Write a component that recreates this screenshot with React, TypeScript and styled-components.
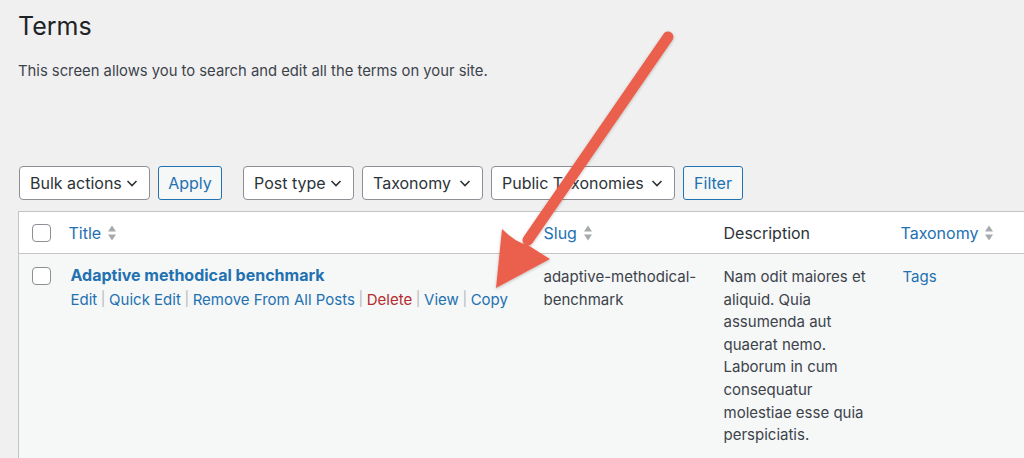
import styled, { createGlobalStyle } from 'styled-components'

const GlobalStyle = createGlobalStyle`
  html, body {
    margin: 0;
    padding: 0;
    background: #f0f0f1;
    overflow: hidden;
  }
  body {
    font-family: Inter, "Noto Sans", sans-serif;
    color: #3c434a;
    font-size: 15px;
  }
`

// Page layout
const Page = styled.div`
  position: relative;
  width: 1024px;
  height: 458px;
  padding-left: 18px;
  box-sizing: border-box;
  overflow: hidden;
`
const Heading = styled.h1`
  margin: 0;
  padding-top: 9px;
  font-size: 25px;
  font-weight: 400;
  line-height: 34px;
  color: #1d2327;
`
const Intro = styled.p`
  margin: 17px 0 0;
  font-size: 14.8px;
  line-height: 22px;
  color: #3c434a;
`

// Toolbar
const Toolbar = styled.div`
  display: flex;
  align-items: center;
  margin-top: 84px;
  margin-left: 1px;
`
const Group = styled.div<{ $gap?: number }>`
  display: flex;
  gap: 8px;
  margin-right: ${(p) => p.$gap ?? 0}px;
`
const Select = styled.div<{ $width: number }>`
  display: flex;
  align-items: center;
  justify-content: space-between;
  box-sizing: border-box;
  width: ${(p) => p.$width}px;
  height: 34px;
  padding: 0 10px 0 10px;
  background: #fff;
  border: 1px solid #8c8f94;
  border-radius: 4px;
  color: #2c3338;
  font-size: 16px;
`
const Button = styled.div<{ $width: number }>`
  display: flex;
  align-items: center;
  justify-content: center;
  box-sizing: border-box;
  width: ${(p) => p.$width}px;
  height: 34px;
  background: #f6f7f7;
  border: 1px solid #2271b1;
  border-radius: 3px;
  color: #2271b1;
  font-size: 16px;
`

// Table
const Table = styled.table`
  margin-top: 11px;
  width: 1100px;
  table-layout: fixed;
  border-collapse: collapse;
  border: 1px solid #c3c4c7;
`
const HeadRow = styled.tr`
  background: #fff;
  border-bottom: 1px solid #c3c4c7;
`
const Th = styled.th`
  height: 41px;
  padding: 0 12px;
  text-align: left;
  font-weight: 400;
  font-size: 16px;
  color: #2c3338;
  vertical-align: middle;
`
const SortLink = styled.span`
  display: inline-flex;
  align-items: center;
  gap: 6px;
  color: #2271b1;
`
const BodyRow = styled.tr`
  background: #f6f7f7;
`
const Td = styled.td`
  padding: 12px 12px 0;
  vertical-align: top;
  font-size: 15px;
  line-height: 22.6px;
  color: #3c434a;
  height: 200px;
`
const CheckCell = styled.td<{ $top: number }>`
  padding: ${(p) => p.$top}px 0 0 13px;
  vertical-align: top;
`
const CheckHead = styled.th`
  padding: 0 0 0 13px;
  vertical-align: middle;
  text-align: left;
`
const Checkbox = styled.span`
  display: block;
  width: 19px;
  height: 18px;
  box-sizing: border-box;
  background: #fff;
  border: 1px solid #8c8f94;
  border-radius: 4px;
`
const RowTitle = styled.div`
  font-weight: 700;
  font-size: 16px;
  line-height: 22px;
  margin-top: -2px;
  color: #2271b1;
  padding-left: 2px;
`
const Actions = styled.div`
  display: flex;
  padding-left: 2px;
  margin-top: 3px;
  font-size: 15px;
  line-height: 22px;
  white-space: nowrap;
`
const Action = styled.span<{ $danger?: boolean }>`
  color: ${(p) => (p.$danger ? '#b32d2e' : '#2271b1')};
`
const Sep = styled.span`
  color: #b4b7ba;
  padding: 0 3.6px;
  font-size: 14px;
  position: relative;
  top: -1px;
`
const Link = styled.span`
  color: #2271b1;
  padding-left: 2px;
`

// Annotation overlay
const Overlay = styled.svg`
  position: absolute;
  left: 0;
  top: 0;
  pointer-events: none;
`

function Chevron() {
  return (
    <svg width="14" height="14" viewBox="0 0 14 14">
      <path d="M2.5 5 L7 9.5 L11.5 5" fill="none" stroke="#2c3338" strokeWidth="1.6" />
    </svg>
  )
}

function SortIcon() {
  return (
    <svg width="10" height="18" viewBox="0 0 10 18">
      <path d="M5 1.5 L9 7.5 H1 Z" fill="#a7aaad" />
      <path d="M5 16.5 L9 10.5 H1 Z" fill="#a7aaad" />
    </svg>
  )
}

const actions = [
  { label: 'Edit' },
  { label: 'Quick Edit' },
  { label: 'Remove From All Posts' },
  { label: 'Delete', danger: true },
  { label: 'View' },
  { label: 'Copy' },
]

export default function App() {
  return (
    <>
      <GlobalStyle />
      <Page>
        <Heading>Terms</Heading>
        <Intro>This screen allows you to search and edit all the terms on your site.</Intro>

        <Toolbar>
          <Group $gap={21}>
            <Select $width={131}>
              Bulk actions <Chevron />
            </Select>
            <Button $width={64}>Apply</Button>
          </Group>
          <Group>
            <Select $width={111}>
              Post type <Chevron />
            </Select>
            <Select $width={121}>
              Taxonomy <Chevron />
            </Select>
            <Select $width={184}>
              Public Taxonomies <Chevron />
            </Select>
            <Button $width={60}>Filter</Button>
          </Group>
        </Toolbar>

        <Table>
          <colgroup>
            <col style={{ width: 38 }} />
            <col style={{ width: 475 }} />
            <col style={{ width: 180 }} />
            <col style={{ width: 177 }} />
            <col />
          </colgroup>
          <thead>
            <HeadRow>
              <CheckHead>
                <Checkbox />
              </CheckHead>
              <Th>
                <SortLink>
                  Title <SortIcon />
                </SortLink>
              </Th>
              <Th>
                <SortLink>
                  Slug <SortIcon />
                </SortLink>
              </Th>
              <Th>Description</Th>
              <Th>
                <SortLink>
                  Taxonomy <SortIcon />
                </SortLink>
              </Th>
            </HeadRow>
          </thead>
          <tbody>
            <BodyRow>
              <CheckCell $top={13}>
                <Checkbox />
              </CheckCell>
              <Td>
                <RowTitle>Adaptive methodical benchmark</RowTitle>
                <Actions>
                  {actions.map((a, i) => (
                    <span key={a.label}>
                      {i > 0 && <Sep>|</Sep>}
                      <Action $danger={a.danger}>{a.label}</Action>
                    </span>
                  ))}
                </Actions>
              </Td>
              <Td>adaptive-methodical-benchmark</Td>
              <Td>
                Nam odit maiores et aliquid. Quia assumenda aut quaerat nemo. Laborum in cum
                consequatur molestiae esse quia perspiciatis.
              </Td>
              <Td>
                <Link>Tags</Link>
              </Td>
            </BodyRow>
          </tbody>
        </Table>

        <Overlay width="1024" height="458" viewBox="0 0 1024 458">
          <defs>
            <filter id="shadow" x="-20%" y="-20%" width="140%" height="140%">
              <feDropShadow dx="0" dy="1" stdDeviation="1.5" floodColor="#000" floodOpacity="0.25" />
            </filter>
          </defs>
          <g filter="url(#shadow)" fill="#ea604d" stroke="none">
            <line
              x1="668"
              y1="37"
              x2="528"
              y2="240"
              stroke="#ea604d"
              strokeWidth="11"
              strokeLinecap="round"
            />
            <path d="M496 288 L502 229 Q516 243 528 245 Q537 251 550 259 Z" />
          </g>
        </Overlay>
      </Page>
    </>
  )
}
